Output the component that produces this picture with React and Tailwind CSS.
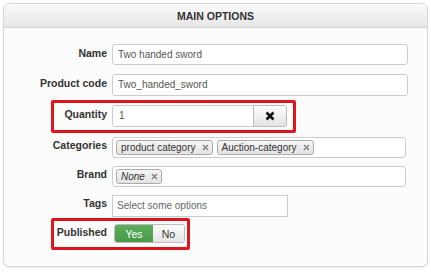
import React from "react";

function ChipX() {
  return (
    <svg width="7" height="7" viewBox="0 0 7 7" className="ml-[6px] shrink-0">
      <path d="M1 1 L6 6 M6 1 L1 6" stroke="#7a7a7a" strokeWidth="1.3" fill="none" />
    </svg>
  );
}

function Chip({ children, italic }) {
  return (
    <span className="flex h-[15px] items-center rounded-[3px] border border-[#aaaaaa] bg-gradient-to-b from-[#f6f6f6] to-[#e3e3e3] pl-[4px] pr-[3px] text-[10px] leading-[12px] text-[#333]">
      <span className={italic ? "italic" : ""}>{children}</span>
      <ChipX />
    </span>
  );
}

function Label({ children, pt = "pt-[3px]" }) {
  return (
    <div className={`w-[103px] shrink-0 text-right text-[10.5px] font-bold leading-[12px] text-[#333] ${pt}`}>
      {children}
    </div>
  );
}

export default function App() {
  return (
    <div className="h-[272px] w-[431px] bg-white pl-[3px] pt-[3px] font-['Liberation_Sans',Arial,sans-serif]">
      <div className="h-[264px] w-[425px] overflow-hidden rounded-[6px] border border-[#d6d6d6] bg-[#fcfcfc] shadow-[0_1px_1px_rgba(0,0,0,0.08)]">
        <div className="flex h-[24px] items-center justify-center border-b border-[#d2d2d2] bg-gradient-to-b from-[#fafafa] to-[#e6e6e6] text-[10.5px] font-bold leading-[12px] text-[#333]">
          MAIN OPTIONS
        </div>
        <div className="flex flex-col pt-[16px]">
          {/* Name */}
          <div className="flex h-[21px] items-start">
            <Label>Name</Label>
            <div className="ml-[5px] flex h-[21px] w-[296px] items-center rounded-[3px] border border-[#cccccc] bg-white pl-[5px] text-[10px] leading-[12px] text-[#555]">
              Two handed sword
            </div>
          </div>
          {/* Product code */}
          <div className="mt-[9px] flex h-[22px] items-start">
            <Label>Product code</Label>
            <div className="ml-[5px] flex h-[22px] w-[296px] items-center rounded-[3px] border border-[#cccccc] bg-white pl-[5px] text-[10px] leading-[12px] text-[#555]">
              Two_handed_sword
            </div>
          </div>
          {/* Quantity */}
          <div className="relative mt-[9px] flex h-[22px] items-start">
            <Label>Quantity</Label>
            <div className="ml-[5px] flex h-[22px]">
              <div className="flex h-[22px] w-[142px] items-center rounded-l-[3px] border border-[#cccccc] bg-white pl-[6px] text-[10px] leading-[12px] text-[#555]">
                1
              </div>
              <div className="-ml-px flex h-[22px] w-[34px] items-center justify-center rounded-r-[3px] border border-[#bdbdbd] bg-gradient-to-b from-[#ffffff] to-[#e2e2e2]">
                <svg width="10" height="10" viewBox="0 0 10 10">
                  <path d="M1.5 1.5 L8.5 8.5 M8.5 1.5 L1.5 8.5" stroke="#111" strokeWidth="2.6" fill="none" />
                </svg>
              </div>
            </div>
            <span className="pointer-events-none absolute left-[47px] top-[-5px] h-[33px] w-[245px] rounded-[2px] border-[3px] border-[#e0141b]" />
          </div>
          {/* Categories */}
          <div className="mt-[10px] flex h-[21px] items-start">
            <Label pt="pt-[2px]">Categories</Label>
            <div className="ml-[5px] flex h-[21px] w-[294px] items-center gap-[4px] rounded-[3px] border border-[#cccccc] bg-white pl-[3px]">
              <Chip>product category</Chip>
              <Chip>Auction-category</Chip>
            </div>
          </div>
          {/* Brand */}
          <div className="mt-[8px] flex h-[21px] items-start">
            <Label pt="pt-[2px]">Brand</Label>
            <div className="ml-[5px] flex h-[21px] w-[294px] items-center rounded-[3px] border border-[#cccccc] bg-white pl-[3px]">
              <Chip italic>None</Chip>
            </div>
          </div>
          {/* Tags */}
          <div className="mt-[8px] flex h-[22px] items-start">
            <Label pt="pt-[2px]">Tags</Label>
            <div className="ml-[5px] flex h-[22px] w-[176px] items-center border border-[#cccccc] bg-white pl-[4px] text-[10px] leading-[12px] text-[#666]">
              Select some options
            </div>
          </div>
          {/* Published */}
          <div className="relative mt-[7px] flex h-[19px] items-start">
            <Label pt="pt-[2px]">Published</Label>
            <div className="ml-[7px] flex h-[19px] overflow-hidden rounded-[3px] border border-[#bbbbbb] text-[10.5px] leading-[12px]">
              <div className="flex w-[38px] items-center justify-center bg-gradient-to-b from-[#5cae5c] to-[#489a48] text-white">
                Yes
              </div>
              <div className="flex w-[31px] items-center justify-center bg-gradient-to-b from-[#fdfdfd] to-[#e4e4e4] text-[#333]">
                No
              </div>
            </div>
            <span className="pointer-events-none absolute left-[47px] top-[-6px] h-[32px] w-[139px] rounded-[2px] border-[3px] border-[#e0141b]" />
          </div>
        </div>
      </div>
    </div>
  );
}
